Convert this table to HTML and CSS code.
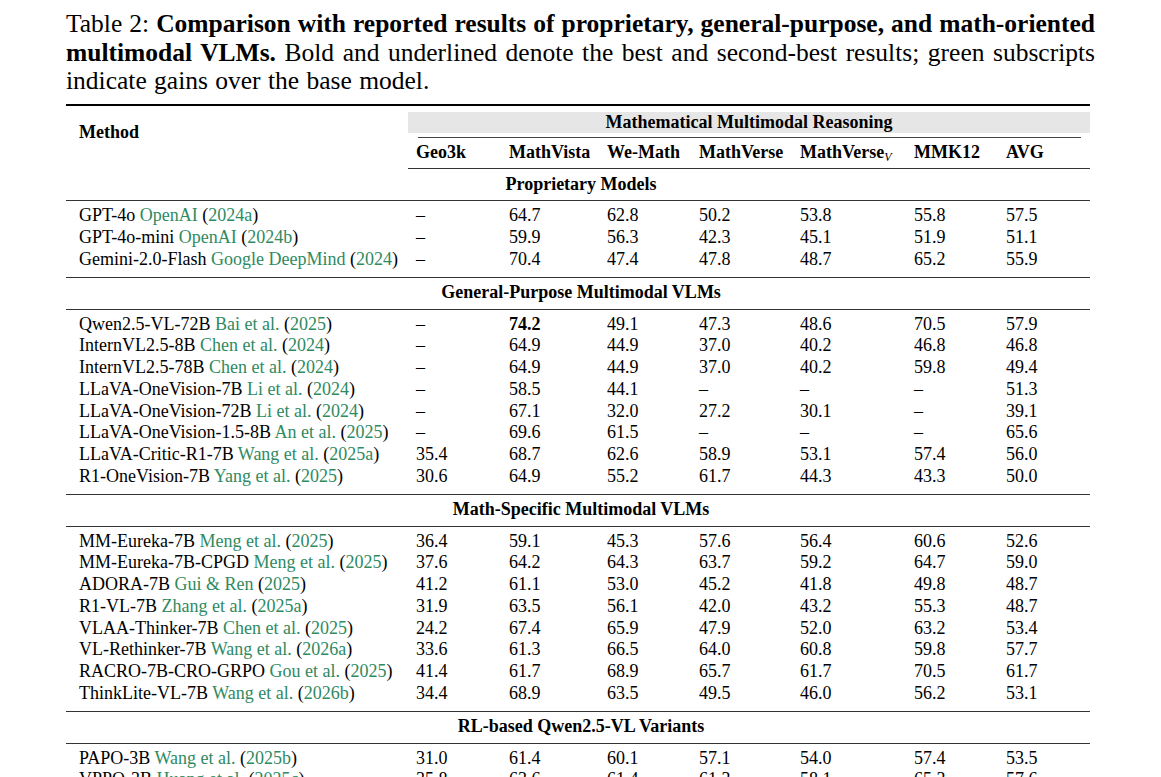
FILE: index.html
```html
<!DOCTYPE html>
<html lang="en">
<head>
<meta charset="UTF-8">
<meta name="viewport" content="width=device-width, initial-scale=1.0">
<title>Table 2</title>
<link rel="stylesheet" href="styles.css">
</head>
<body>
<!-- キャプション -->
<p class="caption">Table 2: <b>Comparison with reported results of proprietary, general-purpose, and math-oriented multimodal VLMs.</b> Bold and underlined denote the best and second-best results; green subscripts <span class="tail">indicate gains over the base model.</span></p>

<table class="results">
  <colgroup>
    <col class="c-method">
    <col class="c-geo">
    <col class="c-vista">
    <col class="c-we">
    <col class="c-verse">
    <col class="c-versev">
    <col class="c-mmk">
    <col class="c-avg">
  </colgroup>
  <thead>
    <tr class="head1">
      <th class="method" rowspan="2">Method</th>
      <th class="group" colspan="7">
        <div class="band">Mathematical Multimodal Reasoning</div>
        <div class="cmid"></div>
      </th>
    </tr>
    <tr class="head2">
      <th>Geo3k</th>
      <th>MathVista</th>
      <th>We-Math</th>
      <th>MathVerse</th>
      <th>MathVerse<sub>V</sub></th>
      <th>MMK12</th>
      <th>AVG</th>
    </tr>
  </thead>
  <tbody>
    <tr class="section"><td colspan="8">Proprietary Models</td></tr>
    <tr class="first"><td>GPT-4o <span class="cite">OpenAI</span> (<span class="cite">2024a</span>)</td><td>–</td><td>64.7</td><td>62.8</td><td>50.2</td><td>53.8</td><td>55.8</td><td>57.5</td></tr>
    <tr><td>GPT-4o-mini <span class="cite">OpenAI</span> (<span class="cite">2024b</span>)</td><td>–</td><td>59.9</td><td>56.3</td><td>42.3</td><td>45.1</td><td>51.9</td><td>51.1</td></tr>
    <tr class="last"><td>Gemini-2.0-Flash <span class="cite">Google DeepMind</span> (<span class="cite">2024</span>)</td><td>–</td><td>70.4</td><td>47.4</td><td>47.8</td><td>48.7</td><td>65.2</td><td>55.9</td></tr>

    <tr class="section"><td colspan="8">General-Purpose Multimodal VLMs</td></tr>
    <tr class="first"><td>Qwen2.5-VL-72B <span class="cite">Bai et al.</span> (<span class="cite">2025</span>)</td><td>–</td><td><b>74.2</b></td><td>49.1</td><td>47.3</td><td>48.6</td><td>70.5</td><td>57.9</td></tr>
    <tr><td>InternVL2.5-8B <span class="cite">Chen et al.</span> (<span class="cite">2024</span>)</td><td>–</td><td>64.9</td><td>44.9</td><td>37.0</td><td>40.2</td><td>46.8</td><td>46.8</td></tr>
    <tr><td>InternVL2.5-78B <span class="cite">Chen et al.</span> (<span class="cite">2024</span>)</td><td>–</td><td>64.9</td><td>44.9</td><td>37.0</td><td>40.2</td><td>59.8</td><td>49.4</td></tr>
    <tr><td>LLaVA-OneVision-7B <span class="cite">Li et al.</span> (<span class="cite">2024</span>)</td><td>–</td><td>58.5</td><td>44.1</td><td>–</td><td>–</td><td>–</td><td>51.3</td></tr>
    <tr><td>LLaVA-OneVision-72B <span class="cite">Li et al.</span> (<span class="cite">2024</span>)</td><td>–</td><td>67.1</td><td>32.0</td><td>27.2</td><td>30.1</td><td>–</td><td>39.1</td></tr>
    <tr><td>LLaVA-OneVision-1.5-8B <span class="cite">An et al.</span> (<span class="cite">2025</span>)</td><td>–</td><td>69.6</td><td>61.5</td><td>–</td><td>–</td><td>–</td><td>65.6</td></tr>
    <tr><td>LLaVA-Critic-R1-7B <span class="cite">Wang et al.</span> (<span class="cite">2025a</span>)</td><td>35.4</td><td>68.7</td><td>62.6</td><td>58.9</td><td>53.1</td><td>57.4</td><td>56.0</td></tr>
    <tr class="last"><td>R1-OneVision-7B <span class="cite">Yang et al.</span> (<span class="cite">2025</span>)</td><td>30.6</td><td>64.9</td><td>55.2</td><td>61.7</td><td>44.3</td><td>43.3</td><td>50.0</td></tr>

    <tr class="section"><td colspan="8">Math-Specific Multimodal VLMs</td></tr>
    <tr class="first"><td>MM-Eureka-7B <span class="cite">Meng et al.</span> (<span class="cite">2025</span>)</td><td>36.4</td><td>59.1</td><td>45.3</td><td>57.6</td><td>56.4</td><td>60.6</td><td>52.6</td></tr>
    <tr><td>MM-Eureka-7B-CPGD <span class="cite">Meng et al.</span> (<span class="cite">2025</span>)</td><td>37.6</td><td>64.2</td><td>64.3</td><td>63.7</td><td>59.2</td><td>64.7</td><td>59.0</td></tr>
    <tr><td>ADORA-7B <span class="cite">Gui &amp; Ren</span> (<span class="cite">2025</span>)</td><td>41.2</td><td>61.1</td><td>53.0</td><td>45.2</td><td>41.8</td><td>49.8</td><td>48.7</td></tr>
    <tr><td>R1-VL-7B <span class="cite">Zhang et al.</span> (<span class="cite">2025a</span>)</td><td>31.9</td><td>63.5</td><td>56.1</td><td>42.0</td><td>43.2</td><td>55.3</td><td>48.7</td></tr>
    <tr><td>VLAA-Thinker-7B <span class="cite">Chen et al.</span> (<span class="cite">2025</span>)</td><td>24.2</td><td>67.4</td><td>65.9</td><td>47.9</td><td>52.0</td><td>63.2</td><td>53.4</td></tr>
    <tr><td>VL-Rethinker-7B <span class="cite">Wang et al.</span> (<span class="cite">2026a</span>)</td><td>33.6</td><td>61.3</td><td>66.5</td><td>64.0</td><td>60.8</td><td>59.8</td><td>57.7</td></tr>
    <tr><td>RACRO-7B-CRO-GRPO <span class="cite">Gou et al.</span> (<span class="cite">2025</span>)</td><td>41.4</td><td>61.7</td><td>68.9</td><td>65.7</td><td>61.7</td><td>70.5</td><td>61.7</td></tr>
    <tr class="last"><td>ThinkLite-VL-7B <span class="cite">Wang et al.</span> (<span class="cite">2026b</span>)</td><td>34.4</td><td>68.9</td><td>63.5</td><td>49.5</td><td>46.0</td><td>56.2</td><td>53.1</td></tr>

    <tr class="section"><td colspan="8">RL-based Qwen2.5-VL Variants</td></tr>
    <tr class="first"><td>PAPO-3B <span class="cite">Wang et al.</span> (<span class="cite">2025b</span>)</td><td>31.0</td><td>61.4</td><td>60.1</td><td>57.1</td><td>54.0</td><td>57.4</td><td>53.5</td></tr>
    <tr><td>VPPO-3B <span class="cite">Huang et al.</span> (<span class="cite">2025c</span>)</td><td>35.8</td><td>63.6</td><td>61.4</td><td>61.3</td><td>58.1</td><td>65.3</td><td>57.6</td></tr>
  </tbody>
</table>
</body>
</html>
```

FILE: styles.css
```css
/* ページ全体 */
body {
  margin: 0;
  padding: 10px 0 0 66px;
  overflow: hidden;
  background: #fff;
  color: #000;
  font-family: "Liberation Serif", "Times New Roman", serif;
}

.caption {
  width: 1029px;
  margin: 0 0 8px 0;
  font-size: 25.5px;
  line-height: 28.5px;
  word-spacing: -1.2px;
  text-align: justify;
}
/* 最終行は詰めない */
.caption .tail {
  word-spacing: 1px;
}

/* 表 */
.results {
  width: 1024px;
  table-layout: fixed;
  border-collapse: separate;
  border-spacing: 0;
  font-size: 18px;
}
.c-method { width: 342px; }
.c-geo { width: 93px; }
.c-vista { width: 98px; }
.c-we { width: 92px; }
.c-verse { width: 101px; }
.c-versev { width: 114px; }
.c-mmk { width: 92px; }
.c-avg { width: 92px; }

.results th,
.results td {
  padding: 0 0 0 8px;
  text-align: left;
  white-space: nowrap;
  line-height: 21.75px;
}
.results td:first-child {
  padding-left: 13px;
}

/* 見出し */
.head1 th {
  border-top: 2px solid #000;
  font-weight: bold;
}
.method {
  vertical-align: middle;
  padding-left: 13px !important;
  padding-bottom: 9px !important;
}
.group {
  padding: 0 !important;
}
.band {
  margin-top: 6px;
  height: 21px;
  line-height: 21px;
  background: #e6e6e6;
  text-align: center;
}
.cmid {
  margin: 4px 9px 0 10px;
  border-top: 1px solid #444;
}
.head2 th {
  padding-top: 4px;
  padding-bottom: 5px;
  border-bottom: 1px solid #333;
}
sub {
  font-style: italic;
  font-weight: normal;
  font-size: 12px;
  line-height: 0;
  vertical-align: -3px;
}

/* セクション行 */
.section td {
  height: 31px;
  padding: 0 0 0 6px !important;
  text-align: center;
  font-weight: bold;
  border-bottom: 1px solid #333;
  vertical-align: middle;
}
tr.last td {
  padding-bottom: 6px;
  border-bottom: 1px solid #333;
}
tr.first td {
  padding-top: 4px;
}

.cite {
  color: #2f8a5f;
}
```
